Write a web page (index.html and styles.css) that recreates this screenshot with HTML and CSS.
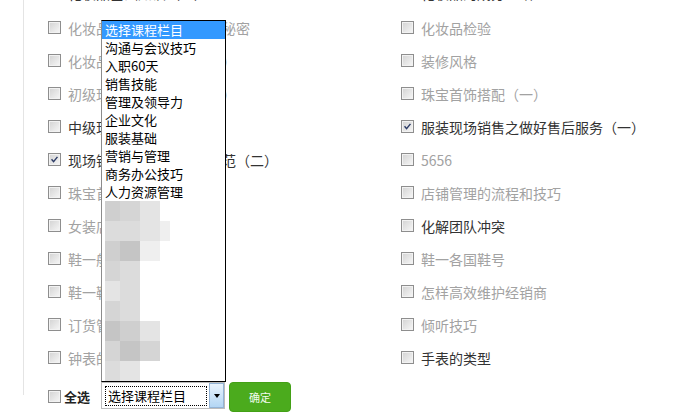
FILE: index.html
```html
<!DOCTYPE html>
<html lang="zh-CN">
<head>
<meta charset="utf-8">
<title>课程选择</title>
<link rel="stylesheet" href="styles.css">
</head>
<body>
<div class="page">
  <div class="grid">
    <div class="item dark"><span class="cb"></span><span>化妆品基础知识（一）</span></div>
    <div class="item dark"><span class="cb"></span><span>化妆品的成分介绍</span></div>

    <div class="item"><span class="cb"></span><span>化妆品中不为人知的美丽秘密</span></div>
    <div class="item"><span class="cb"></span><span>化妆品检验</span></div>

    <div class="item"><span class="cb"></span><span>化妆品基本原料知识（一）</span></div>
    <div class="item"><span class="cb"></span><span>装修风格</span></div>

    <div class="item"><span class="cb"></span><span>初级现场销售的技巧（一）</span></div>
    <div class="item"><span class="cb"></span><span>珠宝首饰搭配（一）</span></div>

    <div class="item dark"><span class="cb"></span><span>中级现场销售技巧</span></div>
    <div class="item dark"><span class="cb on"><svg viewBox="0 0 13 13"><path d="M3 6.3 L5.4 9 L10 3.4"/></svg></span><span>服装现场销售之做好售后服务（一）</span></div>

    <div class="item dark"><span class="cb on"><svg viewBox="0 0 13 13"><path d="M3 6.3 L5.4 9 L10 3.4"/></svg></span><span>现场销售之店铺陈列与规范（二）</span></div>
    <div class="item"><span class="cb"></span><span>5656</span></div>

    <div class="item"><span class="cb"></span><span>珠宝首饰搭配（二）</span></div>
    <div class="item"><span class="cb"></span><span>店铺管理的流程和技巧</span></div>

    <div class="item"><span class="cb"></span><span>女装店铺陈列</span></div>
    <div class="item dark"><span class="cb"></span><span>化解团队冲突</span></div>

    <div class="item"><span class="cb"></span><span>鞋一般知识</span></div>
    <div class="item"><span class="cb"></span><span>鞋一各国鞋号</span></div>

    <div class="item"><span class="cb"></span><span>鞋一鞋的分类</span></div>
    <div class="item"><span class="cb"></span><span>怎样高效维护经销商</span></div>

    <div class="item"><span class="cb"></span><span>订货管理</span></div>
    <div class="item"><span class="cb"></span><span>倾听技巧</span></div>

    <div class="item"><span class="cb"></span><span>钟表的分类</span></div>
    <div class="item dark"><span class="cb"></span><span>手表的类型</span></div>
  </div>

  <div class="bar">
    <label class="all"><span class="cb"></span><span>全选</span></label>
    <div class="selwrap">
      <div class="select">
        <span class="val">选择课程栏目</span>
        <span class="arrow"><i></i></span>
      </div>
      <div class="list">
        <div class="opt sel">选择课程栏目</div>
        <div class="opt">沟通与会议技巧</div>
        <div class="opt">入职60天</div>
        <div class="opt">销售技能</div>
        <div class="opt">管理及领导力</div>
        <div class="opt">企业文化</div>
        <div class="opt">服装基础</div>
        <div class="opt">营销与管理</div>
        <div class="opt">商务办公技巧</div>
        <div class="opt">人力资源管理</div>
        <div class="mosaic">
          <i class="m2"></i><i class="m3"></i><i class="m5"></i><i></i>
          <i class="m4"></i><i class="m4"></i><i class="m5"></i><i class="m6"></i>
          <i class="m2"></i><i class="m1"></i><i class="m6"></i><i></i>
          <i class="m3"></i><i class="m4"></i><i></i><i></i>
          <i class="m5"></i><i class="m4"></i><i></i><i></i>
          <i class="m3"></i><i class="m4"></i><i></i><i></i>
          <i class="m1"></i><i class="m2"></i><i class="m5"></i><i></i>
          <i class="m3"></i><i class="m1"></i><i class="m3"></i><i></i>
          <i class="m4"></i><i class="m5"></i><i></i><i></i>
        </div>
      </div>
    </div>
    <button class="ok" type="button">确定</button>
  </div>
</div>
</body>
</html>
```
FILE: styles.css
```css
html, body {
  margin: 0;
  padding: 0;
  background: #fff;
  overflow: hidden;
}
body {
  font-family: "Noto Sans CJK SC", "Noto Sans", sans-serif;
  height: 420px;
}
.page {
  margin-left: 23px;
  border-left: 1px solid #e4e4e4;
  height: 420px;
  padding-left: 24px;
}
.grid {
  display: grid;
  grid-template-columns: 353px 1fr;
  grid-template-rows: 36px;
  grid-auto-rows: 33px;
  margin-top: -25px;
}
.item {
  display: flex;
  align-items: center;
  gap: 7px;
  font-size: 14px;
  color: #a2a2a2;
  white-space: nowrap;
}
.item.dark {
  color: #333;
}
.cb {
  flex: none;
  width: 13px;
  height: 13px;
  box-sizing: border-box;
  border: 1px solid #8e8e8e;
  background: linear-gradient(135deg, #d2d2d2, #f7f7f7);
  box-shadow: inset 0 0 0 1px #f2f2f2;
  display: flex;
  align-items: center;
  justify-content: center;
}
.cb svg {
  width: 11px;
  height: 11px;
}
.cb svg path {
  fill: none;
  stroke: #2b3b66;
  stroke-width: 1.7;
}
.bar {
  display: flex;
  align-items: flex-start;
  margin-top: 8px;
}
.all {
  display: flex;
  align-items: center;
  gap: 3px;
  margin-top: 8px;
  height: 13px;
  font-size: 13px;
  font-weight: bold;
  color: #222;
}
.selwrap {
  position: relative;
  margin-left: 11px;
}
.select {
  width: 124px;
  height: 27px;
  box-sizing: border-box;
  border: 1px solid #bcbcbc;
  background: #fff;
  display: flex;
  align-items: center;
  padding-left: 3px;
  gap: 2px;
}
.val {
  width: 102px;
  height: 20px;
  box-sizing: border-box;
  border: 1px dotted #000;
  font-size: 13px;
  line-height: 18px;
  padding-left: 2px;
  color: #000;
}
.arrow {
  width: 15px;
  height: 25px;
  box-sizing: border-box;
  border: 1px solid #93b4d6;
  background: linear-gradient(#eaf4fd, #b3d6f4);
  display: flex;
  align-items: center;
  justify-content: center;
}
.arrow i {
  width: 0;
  height: 0;
  border-top: 4px solid #000;
  border-left: 3.5px solid transparent;
  border-right: 3.5px solid transparent;
}
.list {
  position: absolute;
  left: 0;
  bottom: 100%;
  width: 125px;
  box-sizing: border-box;
  border: 1px solid #000;
  border-left-color: #8c8c8c;
  background: #fff;
}
.opt {
  height: 18px;
  line-height: 18px;
  font-size: 13px;
  padding-left: 3px;
  color: #000;
  white-space: nowrap;
}
.opt.sel {
  background: #3399ff;
  color: #fff;
}
.mosaic {
  height: 180px;
  padding-left: 3px;
  display: grid;
  grid-template-columns: 15px 20px 20px 10px;
  grid-auto-rows: 20px;
}
.mosaic i {
  display: block;
}
.m1 { background: #c5c5c5; }
.m2 { background: #cfcfcf; }
.m3 { background: #d5d5d5; }
.m4 { background: #dcdcdc; }
.m5 { background: #e4e4e4; }
.m6 { background: #efefef; }
.ok {
  margin-left: 4px;
  width: 62px;
  height: 30px;
  border: 1px solid #43a016;
  border-radius: 4px;
  background: #4bab1d;
  color: #f2fbee;
  font-family: "Noto Sans CJK SC", sans-serif;
  font-size: 11px;
  padding: 0;
}
```
